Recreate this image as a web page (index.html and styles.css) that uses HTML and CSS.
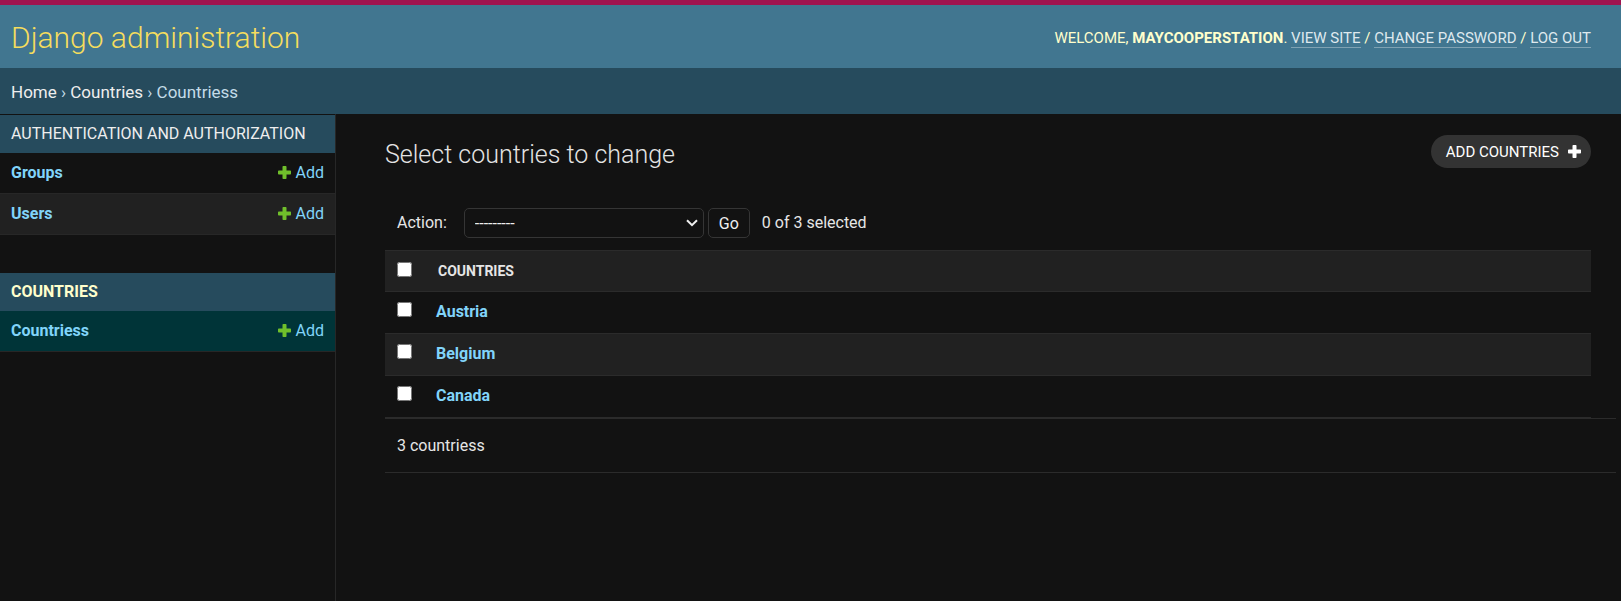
FILE: index.html
```html
<!DOCTYPE html>
<html lang="en">
<head>
<meta charset="utf-8">
<title>Select countries to change | Django administration</title>
<link rel="stylesheet" href="styles.css">
</head>
<body>
<svg class="sprite" aria-hidden="true">
  <symbol id="plus" viewBox="0 0 13 13"><path d="M5.3 0h2.4a.8.8 0 0 1 .8.8v3.7h3.7a.8.8 0 0 1 .8.8v2.4a.8.8 0 0 1-.8.8H8.500v3.700a.8.8 0 0 1-.8.8H5.300a.8.8 0 0 1-.8-.8V8.500H.8a.8.8 0 0 1-.8-.8V5.300a.8.8 0 0 1 .8-.8h3.700V.8a.8.8 0 0 1 .8-.8z"/></symbol>
</svg>
<header class="header">
  <div class="site-name">Django administration</div>
  <div class="user-tools">Welcome, <strong>maycooperstation</strong>. <a href="#">View site</a> / <a href="#">Change password</a> / <a href="#">Log out</a></div>
</header>
<nav class="breadcrumbs" aria-label="Breadcrumbs"><a href="#">Home</a> › <a href="#">Countries</a> › Countriess</nav>
<div class="main">
  <nav class="sidebar" aria-label="Sidebar">
    <table class="module">
      <caption><a href="#">Authentication and Authorization</a></caption>
      <tr><th scope="row"><a href="#">Groups</a></th><td><a class="add" href="#"><svg><use href="#plus"/></svg>Add</a></td></tr>
      <tr><th scope="row"><a href="#">Users</a></th><td><a class="add" href="#"><svg><use href="#plus"/></svg>Add</a></td></tr>
    </table>
    <table class="module current">
      <caption><a href="#">Countries</a></caption>
      <tr><th scope="row"><a href="#">Countriess</a></th><td><a class="add" href="#"><svg><use href="#plus"/></svg>Add</a></td></tr>
    </table>
  </nav>
  <main class="content">
    <div class="title-row">
      <h1>Select countries to change</h1>
      <a class="add-button" href="#">Add countries<svg><use href="#plus"/></svg></a>
    </div>
    <form>
      <div class="actions">
        <label for="action">Action:</label>
        <span class="select-box">
          <select id="action"><option>---------</option><option>Delete selected countriess</option></select>
          <svg viewBox="0 0 12 8" aria-hidden="true"><path d="M1 1.200l5 5 5-5"/></svg>
        </span>
        <button type="button">Go</button>
        <span class="counter">0 of 3 selected</span>
      </div>
      <table class="results">
        <thead><tr><th class="check"><input type="checkbox" aria-label="Select all"></th><th scope="col" class="col-title">Countries</th></tr></thead>
        <tbody>
          <tr><td class="check"><input type="checkbox" aria-label="Select Austria"></td><th scope="row"><a href="#">Austria</a></th></tr>
          <tr><td class="check"><input type="checkbox" aria-label="Select Belgium"></td><th scope="row"><a href="#">Belgium</a></th></tr>
          <tr><td class="check"><input type="checkbox" aria-label="Select Canada"></td><th scope="row"><a href="#">Canada</a></th></tr>
        </tbody>
      </table>
      <p class="paginator">3 countriess</p>
    </form>
  </main>
</div>
</body>
</html>
```
FILE: styles.css
```css
* { box-sizing: border-box; }
body {
  margin: 0;
  min-height: 100vh;
  display: flex;
  flex-direction: column;
  background: #121212;
  color: #e6e6e6;
  font: 16px/20px Roboto, sans-serif;
}
a { color: #81d4fa; text-decoration: none; }
.sprite { display: none; }

.header {
  display: flex;
  align-items: center;
  justify-content: space-between;
  padding: 15px 30px 13px 11px;
  border-top: 5px solid #a0144f;
  background: #417690;
  color: #ffc;
}
.site-name { font-size: 30px; font-weight: 300; line-height: 35px; color: #f5dd5d; }
.user-tools { font-size: 15px; text-transform: uppercase; }
.user-tools a { color: #dfe9ee; border-bottom: 1px solid #7fa2b3; }

.breadcrumbs {
  padding: 14px 11px 12px;
  background: #264b5d;
  color: #c4dce8;
  font-size: 17px;
}
.breadcrumbs a { color: #eee; }

.main { flex: 1; display: flex; }
.sidebar { flex: 0 0 336px; padding-top: 1px; border-right: 1px solid #272727; }
.module { width: 100%; margin-bottom: 38px; border-collapse: separate; border-spacing: 0; }
.module caption {
  padding: 9px 11px;
  background: #264b5d;
  text-align: left;
  text-transform: uppercase;
}
.module caption a { color: #eee; }
.module th, .module td { height: 41px; padding: 0 11px 1px; border-bottom: 1px solid #272727; text-align: left; }
.module td { padding-left: 0; }
.module tr:nth-child(even) { background: #212121; }
.add { display: flex; align-items: center; justify-content: flex-end; gap: 5px; }
.add svg { width: 13px; height: 13px; fill: #70bf2b; }
.current caption a { color: #ffc; font-weight: 700; }
.current tr { background: #003438; }

.content { flex: 1; padding: 21px 30px 20px 49px; }
.title-row { display: flex; justify-content: space-between; align-items: flex-start; margin-bottom: 39px; }
h1 { margin: 5px 0 0; font-size: 25px; font-weight: 300; line-height: 29px; color: #e4e4e4; }
.add-button {
  display: flex;
  align-items: center;
  gap: 9px;
  height: 33px;
  padding: 0 10px 0 15px;
  border-radius: 17px;
  background: #333;
  color: #fff;
  font-size: 15px;
  text-transform: uppercase;
}
.add-button svg { width: 13px; height: 13px; fill: #fff; }

.actions { display: flex; align-items: center; padding: 0 12px; margin-bottom: 12px; }
.actions label { margin-right: 17px; }
.actions select, .actions button {
  height: 30px;
  border: 1px solid #353535;
  border-radius: 5px;
  background: #121212;
  color: #eee;
  font: 16px Roboto, sans-serif;
}
.select-box { display: grid; align-items: center; width: 240px; margin-right: 4px; }
.select-box > * { grid-area: 1 / 1; }
.select-box select { width: 100%; padding: 0 24px 0 10px; appearance: none; }
.select-box svg {
  justify-self: end;
  width: 12px;
  height: 8px;
  margin-right: 6px;
  fill: none;
  stroke: #eee;
  stroke-width: 2;
  pointer-events: none;
}
.actions button { padding: 0 10px; margin-right: 12px; }

.results { width: 100%; border-collapse: separate; border-spacing: 0; }
.results th, .results td { height: 42px; padding: 0 10px 2px; border-bottom: 1px solid #2b2b2b; text-align: left; }
.results thead th { border-top: 1px solid #2b2b2b; background: #212121; }
.results .col-title { padding: 0 12px; font-size: 14px; text-transform: uppercase; }
.results .check { width: 41px; padding: 0 0 7px 12px; }
.results thead .check { padding-bottom: 3px; }
.results input { display: block; width: 15px; height: 15px; margin: 0; }
.results tbody tr:nth-child(even) { background: #212121; }
.paginator {
  margin: 0 -25px 0 0;
  padding: 17px 12px 16px;
  border-top: 1px solid #2b2b2b;
  border-bottom: 1px solid #2b2b2b;
}
```
